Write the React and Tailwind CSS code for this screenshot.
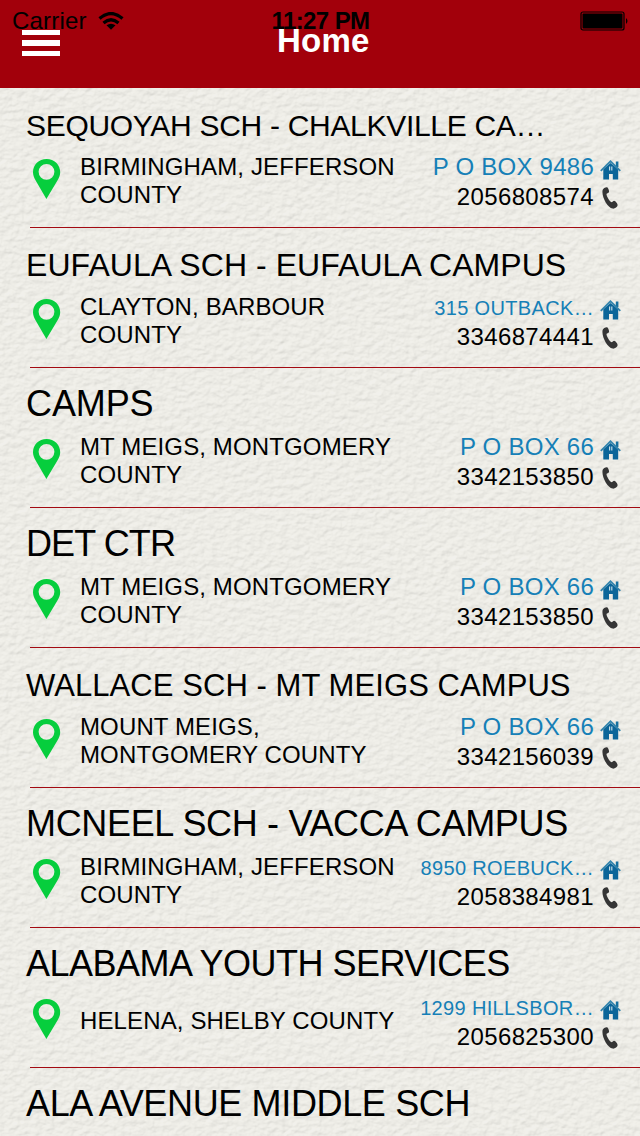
const ROWS = [
  { name: "SEQUOYAH SCH - CHALKVILLE CA…", title: "text-[30px] tracking-[-0.3px] pt-[2px]", place: ["BIRMINGHAM, JEFFERSON", "COUNTY"], address: "P O BOX 9486", phone: "2056808574" },
  { name: "EUFAULA SCH - EUFAULA CAMPUS", title: "text-[32px] tracking-[0.05px] pt-[1px]", place: ["CLAYTON, BARBOUR", "COUNTY"], address: "315 OUTBACK…", small: true, phone: "3346874441" },
  { name: "CAMPS", title: "text-[36px] tracking-[-0.1px] pb-[2px]", place: ["MT MEIGS, MONTGOMERY", "COUNTY"], address: "P O BOX 66", phone: "3342153850" },
  { name: "DET CTR", title: "text-[36px] tracking-[-0.9px] pb-[2px]", place: ["MT MEIGS, MONTGOMERY", "COUNTY"], address: "P O BOX 66", phone: "3342153850" },
  { name: "WALLACE SCH - MT MEIGS CAMPUS", title: "text-[31px] tracking-[0.07px] pt-[3px]", place: ["MOUNT MEIGS,", "MONTGOMERY COUNTY"], address: "P O BOX 66", phone: "3342156039" },
  { name: "MCNEEL SCH - VACCA CAMPUS", title: "text-[36px] tracking-[-0.33px] pb-[2px]", place: ["BIRMINGHAM, JEFFERSON", "COUNTY"], address: "8950 ROEBUCK…", small: true, phone: "2058384981" },
  { name: "ALABAMA YOUTH SERVICES", title: "text-[36px] tracking-[-0.5px] pb-[2px]", place: ["HELENA, SHELBY COUNTY"], address: "1299 HILLSBOR…", small: true, phone: "2056825300" },
  { name: "ALA AVENUE MIDDLE SCH", title: "text-[36px] tracking-[-0.35px] pb-[2px]", place: ["", ""], address: "", phone: "" },
];

function Leather() {
  return (
    <svg className="absolute inset-0 h-full w-full" aria-hidden="true">
      <filter id="leather" x="0" y="0" width="100%" height="100%" colorInterpolationFilters="sRGB">
        <feTurbulence type="fractalNoise" baseFrequency="0.13 0.17" numOctaves="3" seed="8" />
        <feColorMatrix values="0 0 0 0 0  0 0 0 0 0  0 0 0 0 0  1 0 0 0 0" />
        <feDiffuseLighting surfaceScale="1.3" diffuseConstant="1.13" lightingColor="#edece6">
          <feDistantLight azimuth="240" elevation="63" />
        </feDiffuseLighting>
      </filter>
      <rect width="100%" height="100%" fill="#edece6" />
      <rect width="100%" height="100%" filter="url(#leather)" opacity="0.24" />
    </svg>
  );
}

function Pin() {
  return (
    <svg width="28" height="40" viewBox="0 0 28 40" className="shrink-0">
      <path fill="#06ce3d" fillRule="evenodd" d="M13.600 0C5.800 0 0 5.800 0 13.300C0 16.300 1 18.500 2.500 21.200L13.400 40L24.600 21.200C26.200 18.500 27.200 16.300 27.200 13.300C27.200 5.800 21.300 0 13.600 0ZM13.500 4.900A7.900 7.900 0 1 1 13.500 20.700A7.900 7.900 0 0 1 13.500 4.900Z" />
    </svg>
  );
}

function House() {
  return (
    <svg width="22" height="20" viewBox="0 0 22 20" className="shrink-0">
      <path fill="#16709f" d="M15.800 1.500h2.600v5.500h-2.600z" />
      <path fill="#0b6599" d="M3.300 9.300L10.500 3l7.700 6.300V19.500h-5.400v-5.500H9v5.500H3.300z" />
      <path fill="none" stroke="#3384ac" strokeWidth="1.800" d="M.8 10.800L10.500 1.300L20.300 10.800" />
      <path fill="#c3dae5" d="M9 6.500h1.200v4H9zM11.200 6.500h1.200v4h-1.200z" />
    </svg>
  );
}

function Phone() {
  return (
    <svg width="16" height="22" viewBox="0 0 16 22" className="shrink-0">
      <path fill="#353535" d="M.6 3C1.100 1.300 3.500 0 5 .2C6.200.5 7.300 3.700 7 5C6.700 6.300 4.600 6.100 4.500 7.300C4.500 9.200 7.500 14.200 9.100 15.100C10.200 15.600 11 13.900 12.100 13.800C13.500 13.800 15.700 16.900 15.600 18.200C15.400 19.700 12.800 21.900 10.700 21.600C5.300 20.500-.7 9.300.6 3Z" />
    </svg>
  );
}

function Row({ row }) {
  return (
    <li className="flex h-[140px] shrink-0 flex-col">
      <h2 className={"ml-[26px] flex h-[65px] shrink-0 items-center whitespace-nowrap " + row.title}>
        <span className="mt-[8px]">{row.name}</span>
      </h2>
      <div className="flex h-[74px] shrink-0 pl-[33px] pr-[18px] text-[24px] leading-7">
        <div className="pt-[6px]"><Pin /></div>
        <div className={"ml-[19px] w-[329px] whitespace-nowrap tracking-[0.13px] " + (row.place.length === 1 ? "pt-[14px]" : "")}>
          {row.place.map((line, i) => <p key={i}>{line}</p>)}
        </div>
        <div className="flex grow flex-col whitespace-nowrap">
          <div className="flex h-[30px] items-start justify-end">
            <span className={"text-[#1680b7] " + (row.small ? "pt-px text-[20px] tracking-[0.35px]" : "tracking-[0.25px]")}>{row.address}</span>
            {row.address && <span className="ml-[6px] mt-[7px]"><House /></span>}
          </div>
          <div className="flex h-[30px] items-start justify-end">
            <span className="tracking-[0.38px]">{row.phone}</span>
            {row.phone && <span className="ml-[8px] mr-[4px] mt-[4px]"><Phone /></span>}
          </div>
        </div>
      </div>
      <div className="ml-[30px] h-px shrink-0 bg-[#a30a12]" />
    </li>
  );
}

export default function App() {
  return (
    <div className="relative h-[1136px] w-[640px] overflow-hidden font-['Liberation_Sans',Arial,sans-serif] text-black">
      <Leather />
      <div className="relative flex h-full flex-col">
        <header className="relative h-[88px] shrink-0 bg-[#a2000b]">
          <div className="grid h-10 grid-cols-3 items-center pl-3 pr-[11px] text-[24px] leading-10">
            <div className="flex items-center gap-[11px] pt-px">
              <span className="tracking-[0.2px]">Carrier</span>
              <svg width="26" height="18" viewBox="0 0 26 18">
                <path fill="none" stroke="#000" strokeWidth="3.200" d="M1.500 6.500Q13-3.500 24.500 6.500M5.500 11Q13 4.500 20.500 11" />
                <path d="M8.500 13.300Q13 10 17.500 13.300L13 17.800Z" />
              </svg>
            </div>
            <span className="pt-px text-center font-bold tracking-[-0.6px]">11:27 PM</span>
            <svg width="49" height="20" viewBox="0 0 49 20" className="justify-self-end">
              <rect x="1" y="1" width="43" height="18" rx="2" fill="none" stroke="#000" strokeWidth="1.200" />
              <rect x="2.500" y="2.500" width="40" height="15" rx="1" />
              <path d="M46 7Q49 10 46 13Z" />
            </svg>
          </div>
          <div className="absolute left-[22px] top-[30px] flex w-[38px] flex-col gap-[5px]">
            <i className="h-[5px] bg-white" />
            <i className="h-[6px] bg-white" />
            <i className="h-[5px] bg-white" />
          </div>
          <h1 className="absolute left-[277px] top-[21px] text-[33px] font-bold leading-10 tracking-[0.2px] text-white">Home</h1>
        </header>
        <ul className="flex flex-col">
          {ROWS.map((row) => <Row key={row.name} row={row} />)}
        </ul>
      </div>
    </div>
  );
}
